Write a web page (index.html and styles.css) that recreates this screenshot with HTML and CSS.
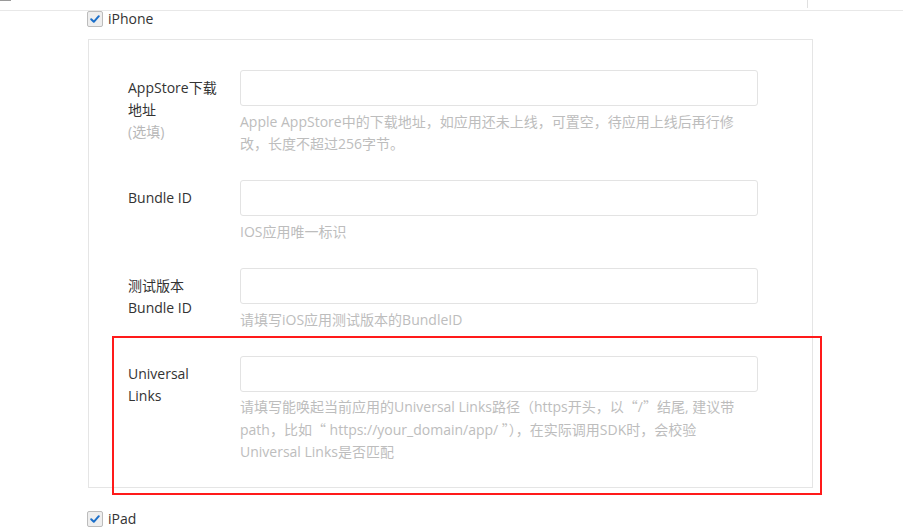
FILE: index.html
```html
<!DOCTYPE html>
<html lang="zh">
<head>
<meta charset="utf-8">
<title>iOS 平台配置</title>
<link rel="stylesheet" href="styles.css">
</head>
<body>
<div class="topbar">
  <div class="topbar-main"><span class="stub"></span></div>
  <div class="topbar-side"></div>
</div>

<label class="check-row">
  <span class="checkbox"><svg viewBox="0 0 14 14" width="14" height="14"><path d="M3.2 7.2 L5.8 9.8 L10.8 4.2" fill="none" stroke="#1c6fc9" stroke-width="2" stroke-linecap="round" stroke-linejoin="round"/></svg></span>
  <span class="check-text">iPhone</span>
</label>

<div class="panel">
  <div class="row">
    <div class="label">AppStore下载<br>地址<br><span class="optional">(选填)</span></div>
    <div class="field">
      <div class="input"></div>
      <div class="help">Apple AppStore中的下载地址，如应用还未上线，可置空，待应用上线后再行修<br>改，长度不超过256字节。</div>
    </div>
  </div>
  <div class="row">
    <div class="label">Bundle ID</div>
    <div class="field">
      <div class="input"></div>
      <div class="help">IOS应用唯一标识</div>
    </div>
  </div>
  <div class="row">
    <div class="label">测试版本<br>Bundle ID</div>
    <div class="field">
      <div class="input"></div>
      <div class="help">请填写iOS应用测试版本的BundleID</div>
    </div>
  </div>
  <div class="row row-highlight">
    <div class="highlight"></div>
    <div class="label">Universal<br>Links</div>
    <div class="field">
      <div class="input"></div>
      <div class="help help-tight">请填写能唤起当前应用的Universal Links路径<span class="cjk">（</span>https开头，以<span class="cjk">“</span>/<span class="cjk">”</span>结尾, 建议带<br>path，比如<span class="cjk">“</span> https://your_domain/app/ <span class="cjk">”）</span>，在实际调用SDK时，会校验<br>Universal Links是否匹配</div>
    </div>
  </div>
</div>

<label class="check-row check-row-bottom">
  <span class="checkbox"><svg viewBox="0 0 14 14" width="14" height="14"><path d="M3.2 7.2 L5.8 9.8 L10.8 4.2" fill="none" stroke="#1c6fc9" stroke-width="2" stroke-linecap="round" stroke-linejoin="round"/></svg></span>
  <span class="check-text">iPad</span>
</label>
</body>
</html>
```

FILE: styles.css
```css
html, body {
  margin: 0;
  padding: 0;
  background: #ffffff;
}
body {
  font-family: "Open Sans", "Noto Sans CJK SC", sans-serif;
  font-size: 14px;
  color: #333333;
  width: 903px;
  height: 532px;
  overflow: hidden;
}

.topbar {
  display: grid;
  grid-template-columns: 807px 1fr;
  height: 10px;
  border-bottom: 1px solid #e8e8e8;
}
.topbar-main {
  display: flex;
  align-items: flex-start;
}
.stub {
  display: block;
  width: 11px;
  height: 1px;
  background: #9a9a9a;
}
.topbar-side {
  border-left: 1px solid #e0e0e0;
  height: 8px;
}

.check-row {
  display: flex;
  align-items: center;
  gap: 5px;
  margin: 0 0 13px 87px;
  height: 15px;
  line-height: 15px;
}
.check-row-bottom {
  margin: 23px 0 0 87px;
}
.checkbox {
  display: flex;
  align-items: center;
  justify-content: center;
  width: 14px;
  height: 14px;
  border: 1px solid #bcbcbc;
  border-radius: 2px;
  background: #eeeeee;
}
.checkbox svg {
  display: block;
}
.check-text {
  color: #333333;
  font-size: 14px;
}

.panel {
  margin-left: 88px;
  width: 725px;
  box-sizing: border-box;
  border: 1px solid #e5e5e5;
  padding: 30px 0 0 39px;
}

.row {
  display: grid;
  grid-template-columns: 112px 518px;
  margin-bottom: 25px;
}
.row:last-child {
  margin-bottom: 24px;
}
.row-highlight {
  position: relative;
}
.highlight {
  position: absolute;
  left: -16px;
  top: -20px;
  width: 710px;
  height: 159px;
  box-sizing: border-box;
  border: 2px solid #ff1a1a;
  pointer-events: none;
}

.label {
  padding-top: 7px;
  line-height: 22px;
  color: #333333;
}
.optional {
  color: #b8b8b8;
}

.input {
  height: 36px;
  box-sizing: border-box;
  border: 1px solid #e3e3e3;
  border-radius: 3px;
  background: #ffffff;
}
.help {
  margin-top: 5px;
  line-height: 22px;
  color: #bdbdbd;
  white-space: nowrap;
}
.help-tight {
  margin-top: 3px;
}
.cjk {
  font-family: "Noto Sans CJK SC", sans-serif;
}
```
